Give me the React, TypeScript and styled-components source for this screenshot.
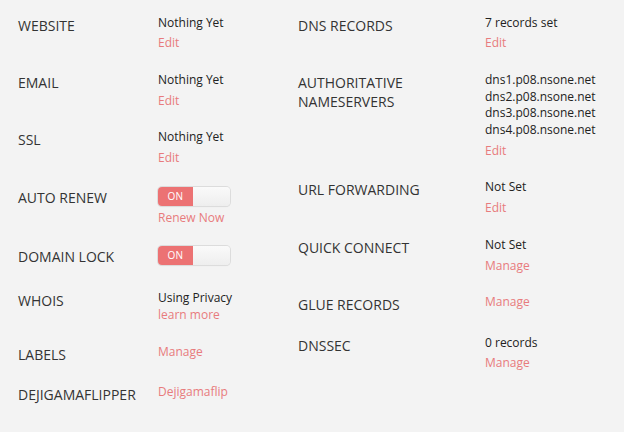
import styled, { createGlobalStyle } from "styled-components";

type Item = {
  label: string;
  lines?: string[];
  toggle?: boolean;
  link?: string;
  tight?: boolean;
};

const left: Item[] = [
  { label: "Website", lines: ["Nothing Yet"], link: "Edit" },
  { label: "Email", lines: ["Nothing Yet"], link: "Edit" },
  { label: "SSL", lines: ["Nothing Yet"], link: "Edit" },
  { label: "Auto Renew", toggle: true, link: "Renew Now" },
  { label: "Domain Lock", toggle: true },
  { label: "Whois", lines: ["Using Privacy"], link: "learn more", tight: true },
  { label: "Labels", link: "Manage" },
  { label: "Dejigamaflipper", link: "Dejigamaflip" },
];

const right: Item[] = [
  { label: "DNS Records", lines: ["7 records set"], link: "Edit" },
  {
    label: "Authoritative Nameservers",
    lines: [
      "dns1.p08.nsone.net",
      "dns2.p08.nsone.net",
      "dns3.p08.nsone.net",
      "dns4.p08.nsone.net",
    ],
    link: "Edit",
  },
  { label: "URL Forwarding", lines: ["Not Set"], link: "Edit" },
  { label: "Quick Connect", lines: ["Not Set"], link: "Manage" },
  { label: "Glue Records", link: "Manage" },
  { label: "DNSSEC", lines: ["0 records"], link: "Manage" },
];

// space above the link, depending on what sits over it
function linkGap(item: Item) {
  if (item.toggle) return -1;
  if (!item.lines) return 0;
  if (item.tight) return -0.3;
  return 4;
}

function Setting({ item, labelWidth }: { item: Item; labelWidth: number }) {
  return (
    <Row $labelWidth={labelWidth}>
      <Label>{item.label}</Label>
      <Value>
        {item.lines?.map((l) => (
          <Text key={l}>{l}</Text>
        ))}
        {item.toggle && (
          <Switch>
            <SwitchOn>ON</SwitchOn>
            <SwitchOff />
          </Switch>
        )}
        {item.link && (
          <Link href="#" $gap={linkGap(item)}>
            {item.link}
          </Link>
        )}
      </Value>
    </Row>
  );
}

export default function App() {
  return (
    <>
      <Global />
      <Page>
        <Column $width={280}>
          {left.map((it) => (
            <Setting key={it.label} item={it} labelWidth={140} />
          ))}
        </Column>
        <Column>
          {right.map((it) => (
            <Setting key={it.label} item={it} labelWidth={187} />
          ))}
        </Column>
      </Page>
    </>
  );
}

const Global = createGlobalStyle`
  html, body {
    margin: 0;
    background: #f3f3f3;
  }
  body {
    font-family: "Open Sans", "Liberation Sans", sans-serif;
    color: #333;
  }
`;

const Page = styled.div`
  display: flex;
  padding: 14.5px 0 0 18px;
  width: 624px;
  height: 432px;
  box-sizing: border-box;
  overflow: hidden;
`;

const Column = styled.div<{ $width?: number }>`
  display: flex;
  flex-direction: column;
  gap: 20px;
  width: ${(p) => (p.$width ? `${p.$width}px` : "auto")};
  flex: ${(p) => (p.$width ? "none" : "1")};
`;

const Row = styled.div<{ $labelWidth: number }>`
  display: grid;
  grid-template-columns: ${(p) => p.$labelWidth}px 1fr;
  align-items: start;
`;

const Label = styled.div`
  font-size: 14px;
  line-height: 19.5px;
  padding-top: 1px;
  text-transform: uppercase;
  color: #333;
  width: 130px;
`;

const Value = styled.div`
  display: flex;
  flex-direction: column;
  align-items: flex-start;
  font-size: 12px;
  line-height: 16.7px;
`;

const Text = styled.span`
  color: #222;
`;

const Link = styled.a<{ $gap: number }>`
  margin-top: ${(p) => p.$gap}px;
  color: #e87b7d;
  text-decoration: none;
`;

const Switch = styled.div`
  display: flex;
  width: 72px;
  height: 19px;
  margin: 0 0 5px;
  border-radius: 4px;
  overflow: hidden;
  box-shadow: 0 0 0 1px #dcdcdc, 0 1px 1px rgba(0, 0, 0, 0.08);
`;

const SwitchOn = styled.span`
  width: 35px;
  background: #ec7273;
  color: #fff;
  font-size: 10px;
  line-height: 19px;
  text-align: center;
  letter-spacing: 0.3px;
`;

const SwitchOff = styled.span`
  flex: 1;
  background: linear-gradient(#fafafa, #eeeeee);
`;
